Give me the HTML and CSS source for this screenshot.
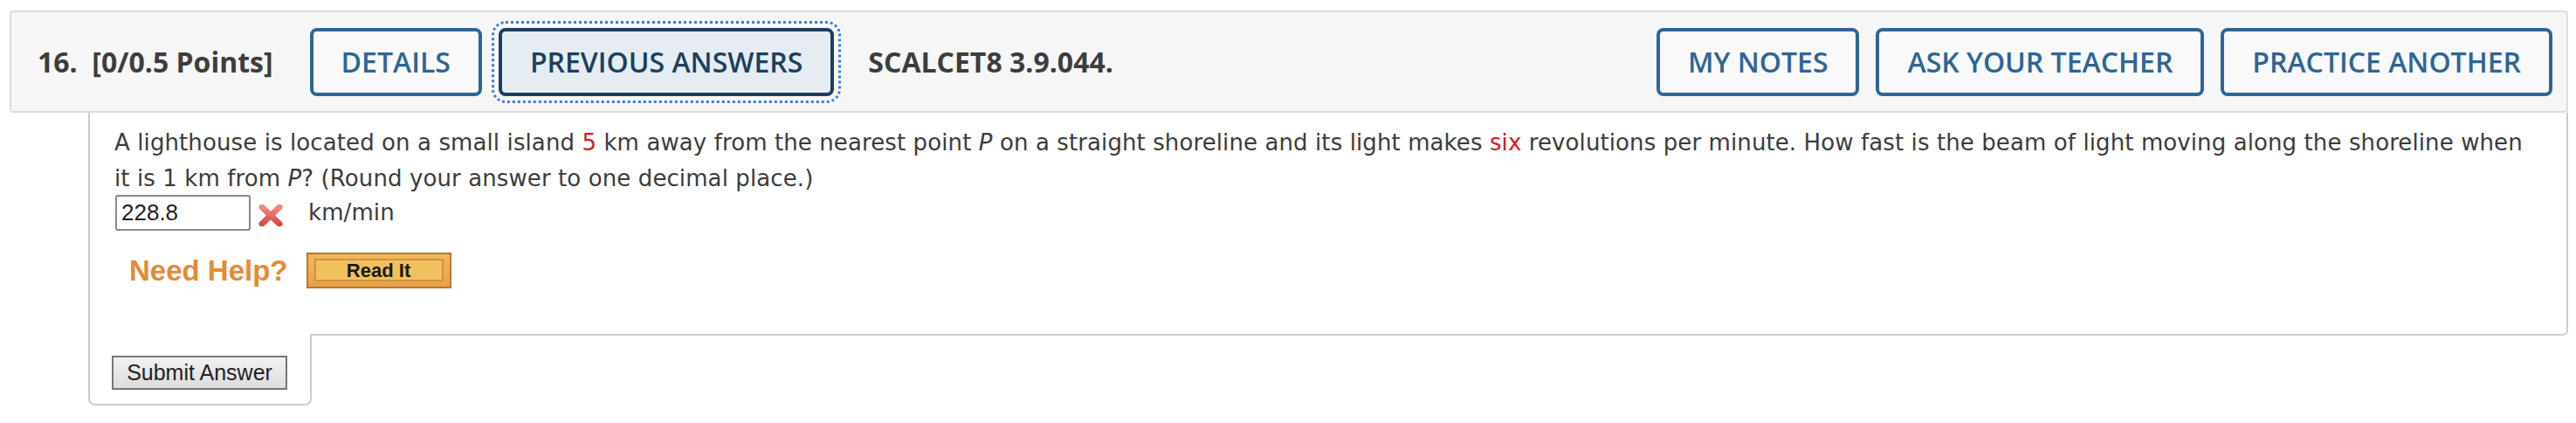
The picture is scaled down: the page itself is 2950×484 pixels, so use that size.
FILE: index.html
```html
<!DOCTYPE html>
<html>
<head>
<meta charset="utf-8">
<link rel="stylesheet" href="styles.css">
</head>
<body>
<div class="page">
  <div class="qheader">
    <div class="left">
      <span class="qnum">16.&nbsp; [0/0.5 Points]</span>
      <button class="btn">DETAILS</button>
      <button class="btn active">PREVIOUS ANSWERS</button>
      <span class="qcode">SCALCET8 3.9.044.</span>
    </div>
    <div class="right">
      <button class="btn">MY NOTES</button>
      <button class="btn">ASK YOUR TEACHER</button>
      <button class="btn">PRACTICE ANOTHER</button>
    </div>
  </div>
  <div class="qbody">
    <div class="question">
      <p class="text">A lighthouse is located on a small island <span class="red">5</span> km away from the nearest point <i>P</i> on a straight shoreline and its light makes <span class="red">six</span> revolutions per minute. How fast is the beam of light moving along the shoreline when it is 1 km from <i>P</i>? (Round your answer to one decimal place.)</p>
      <div class="answer">
        <span class="input">228.8</span>
        <svg class="xmark" width="28" height="25" viewBox="0 0 28 25">
          <defs>
            <linearGradient id="xg" x1="0" y1="0" x2="0" y2="1">
              <stop offset="0" stop-color="#f08a8a"/>
              <stop offset="1" stop-color="#d94848"/>
            </linearGradient>
          </defs>
          <path d="M4 3 L24 22 M24 3 L4 22" stroke="url(#xg)" stroke-width="7" stroke-linecap="round" fill="none"/>
        </svg>
        <span class="unit">km/min</span>
      </div>
      <div class="help">
        <span class="needhelp">Need Help?</span>
        <span class="readit"><span class="readit-inner">Read It</span></span>
      </div>
    </div>
    <div class="submit">
      <button class="submit-btn">Submit Answer</button>
    </div>
  </div>
</div>
</body>
</html>
```

FILE: styles.css
```css
html, body {
  margin: 0;
  padding: 0;
  background: #ffffff;
}
.page {
  padding: 12px 9px 0 11px;
}
.qheader {
  display: flex;
  align-items: center;
  justify-content: space-between;
  height: 113px;
  background: #f6f6f6;
  border: 2px solid #dcdcdc;
  border-radius: 4px;
  padding: 0 16px 0 30px;
  font-family: "Open Sans", "Liberation Sans", sans-serif;
}
.left, .right {
  display: flex;
  align-items: center;
  gap: 19px;
}
.qnum {
  font-size: 32px;
  font-weight: 700;
  color: #3d3d3d;
  margin-right: 23px;
  white-space: nowrap;
}
.qcode {
  font-size: 32px;
  font-weight: 700;
  color: #3d3d3d;
  margin-left: 20px;
  white-space: nowrap;
}
.btn {
  font-family: "Open Sans", "Liberation Sans", sans-serif;
  font-size: 32px;
  font-weight: 600;
  color: #2e6596;
  background: #f9f9f9;
  border: 4px solid #2e6596;
  border-radius: 8px;
  height: 78px;
  padding: 0 32px;
  white-space: nowrap;
  line-height: 1;
}
.btn.active {
  background: #e6edf2;
  color: #1b3f60;
  border-color: #1b3f60;
  outline: 3px dotted #3b7ddf;
  outline-offset: 5px;
}
.qbody {
  margin-left: 90px;
}
.question {
  border: 2px solid #cccccc;
  border-top: none;
  border-bottom-right-radius: 6px;
  padding: 14px 28px 52px 28px;
  font-family: Verdana, "DejaVu Sans", sans-serif;
  font-size: 26px;
  line-height: 41px;
  letter-spacing: 0.1px;
  color: #3c3c3c;
}
.text {
  margin: 0;
}
.red {
  color: #d0201b;
}
.answer {
  display: flex;
  align-items: center;
  height: 41px;
  margin-top: -2px;
}
.input {
  box-sizing: border-box;
  width: 155px;
  height: 41px;
  border: 2px solid #8a8a8a;
  border-radius: 3px;
  font-family: "Liberation Sans", Arial, sans-serif;
  font-size: 26px;
  letter-spacing: 0;
  line-height: 37px;
  padding-left: 5px;
  color: #222;
  background: #fff;
  margin-left: 1px;
}
.xmark {
  margin-left: 9px;
  margin-top: 6px;
}
.unit {
  margin-left: 29px;
}
.help {
  display: flex;
  align-items: center;
  margin-top: 25px;
  height: 41px;
}
.needhelp {
  font-family: "Liberation Sans", Arial, sans-serif;
  font-weight: 700;
  font-size: 33px;
  letter-spacing: 0;
  color: #e38b36;
  margin-left: 17px;
}
.readit {
  box-sizing: border-box;
  display: flex;
  width: 166px;
  height: 41px;
  margin-left: 21px;
  border: 2px solid #b07a3a;
  background: linear-gradient(#f3b85a, #e9a042);
  padding: 5px 7px 6px 7px;
}
.readit-inner {
  flex: 1;
  display: flex;
  align-items: center;
  justify-content: center;
  border: 2px solid #c99445;
  background: #f2c05d;
  font-family: "Liberation Sans", Arial, sans-serif;
  font-weight: 700;
  font-size: 22px;
  letter-spacing: 0;
  color: #1a1a1a;
}
.submit {
  box-sizing: border-box;
  width: 256px;
  margin-top: -2px;
  background: #fff;
  border: 2px solid #cccccc;
  border-top: none;
  border-radius: 0 0 8px 8px;
  padding: 25px 0 16px 25px;
}
.submit-btn {
  display: block;
  box-sizing: border-box;
  width: 201px;
  height: 39px;
  border: 2px solid #767676;
  background: linear-gradient(#f2f2f2, #dcdcdc);
  font-family: "Liberation Sans", Arial, sans-serif;
  font-size: 25px;
  color: #222;
  padding: 0;
  line-height: 35px;
}
```
